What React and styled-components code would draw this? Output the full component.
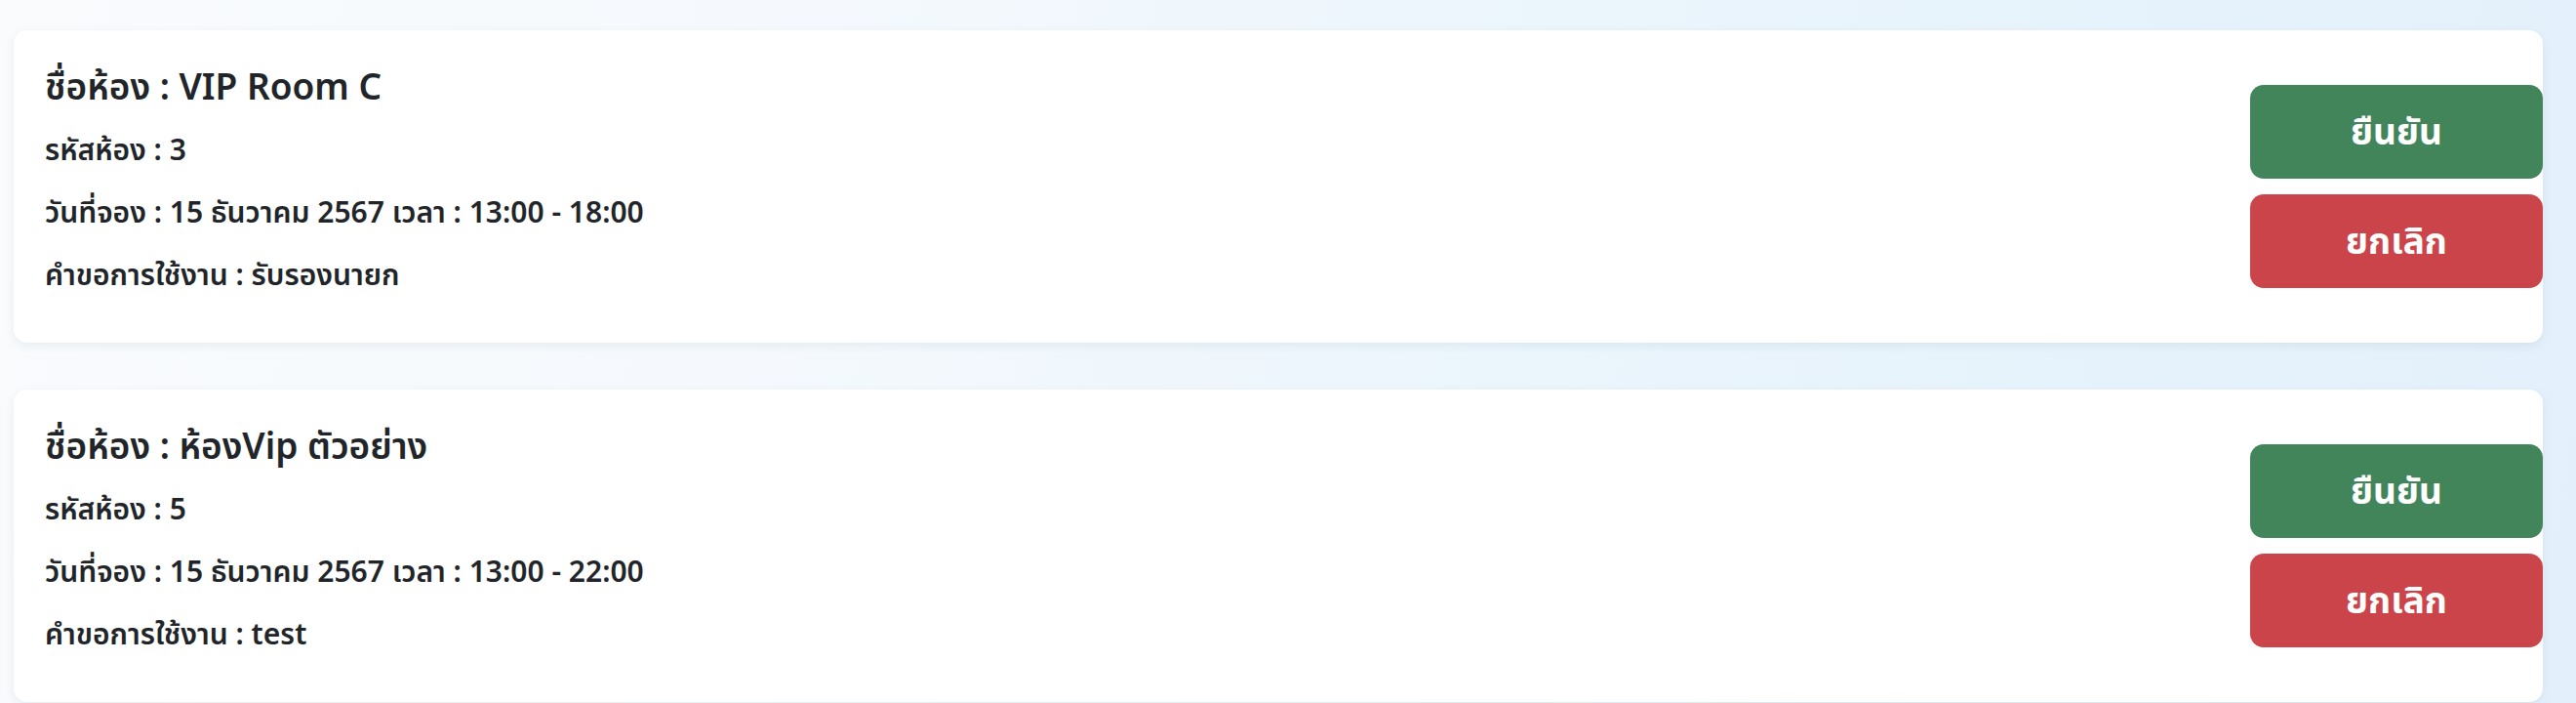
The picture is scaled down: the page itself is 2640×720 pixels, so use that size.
import React from 'react'
import styled, { createGlobalStyle } from 'styled-components'

const GlobalStyle = createGlobalStyle`
    html, body {
        margin: 0;
        padding: 0;
    }
    body {
        font-family: "Noto Sans", "Noto Sans Thai", "Noto Sans Thai Looped", sans-serif;
        color: #212529;
        background: linear-gradient(100deg, #f9fbfd 0%, #f5f9fd 30%, #eaf5fc 60%, #e3f0fb 100%);
        min-height: 720px;
    }
`

export const Page = styled.main`
    display: flex;
    flex-direction: column;
    gap: 48px;
    padding: 31px 34px 0 14px;
`

export const Card = styled.section`
    display: flex;
    align-items: center;
    justify-content: space-between;
    height: 320px;
    box-sizing: border-box;
    padding-left: 32px;
    background: #fff;
    border-radius: 14px;
    box-shadow: 0 3px 10px rgba(40, 60, 80, 0.08);
`

export const Details = styled.div`
    display: flex;
    flex-direction: column;
    align-self: flex-start;
    padding-top: 35px;
`

export const Title = styled.h3`
    margin: 0 0 25px;
    font-size: 37px;
    font-weight: 600;
    line-height: 44px;
`

export const Line = styled.p`
    margin: 0;
    font-size: 30px;
    font-weight: 600;
    line-height: 36px;
    & + & {
        margin-top: 28px;
    }
`

export const Actions = styled.div`
    display: flex;
    flex-direction: column;
    gap: 16px;
    width: 300px;
`

export const Button = styled.button`
    height: 96px;
    padding-top: 4px;
    border: none;
    border-radius: 14px;
    background: ${(props) => (props.danger ? '#cb444a' : '#42855b')};
    color: #fff;
    font-family: inherit;
    font-size: 37px;
    font-weight: 700;
    cursor: pointer;
`

const bookings = [
    { name: 'VIP Room C', id: 3, date: '15 ธันวาคม 2567', time: '13:00 - 18:00', note: 'รับรองนายก' },
    { name: 'ห้องVip ตัวอย่าง', id: 5, date: '15 ธันวาคม 2567', time: '13:00 - 22:00', note: 'test' }
]

export default function App() {
    return (
        <>
            <GlobalStyle />
            <Page>
                {bookings.map((b) => (
                    <Card key={b.id}>
                        <Details>
                            <Title>ชื่อห้อง : {b.name}</Title>
                            <Line>รหัสห้อง : {b.id}</Line>
                            <Line>วันที่จอง : {b.date} เวลา : {b.time}</Line>
                            <Line>คำขอการใช้งาน : {b.note}</Line>
                        </Details>
                        <Actions>
                            <Button>ยืนยัน</Button>
                            <Button danger>ยกเลิก</Button>
                        </Actions>
                    </Card>
                ))}
            </Page>
        </>
    )
}
